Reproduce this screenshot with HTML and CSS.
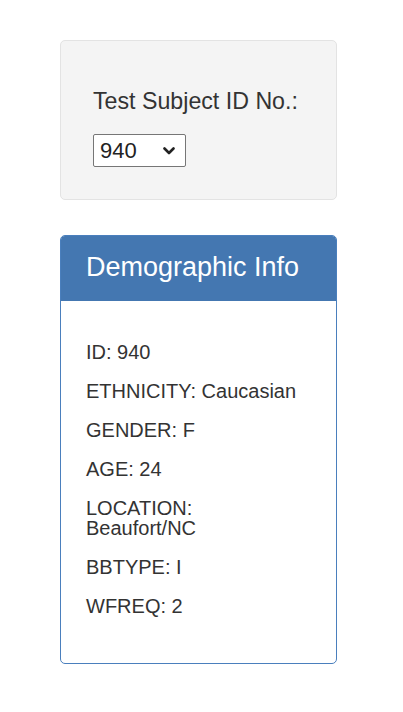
FILE: index.html
```html
<!DOCTYPE html>
<html>
<head>
<meta charset="utf-8">
<link rel="stylesheet" href="styles.css">
</head>
<body>
<div class="col">
  <div class="well">
    <label class="lbl" for="sel">Test Subject ID No.:</label>
    <div class="select-wrap">
      <select id="sel" class="sel"><option>940</option></select>
      <svg class="chev" width="12" height="8" viewBox="0 0 12 8"><path d="M1.5 1.5 L6 6 L10.5 1.5" fill="none" stroke="#222" stroke-width="2.6" stroke-linecap="round" stroke-linejoin="round"/></svg>
    </div>
  </div>
  <div class="panel">
    <div class="panel-head">Demographic Info</div>
    <div class="panel-body">
      <p>ID: 940</p>
      <p>ETHNICITY: Caucasian</p>
      <p>GENDER: F</p>
      <p>AGE: 24</p>
      <p>LOCATION:<br>Beaufort/NC</p>
      <p>BBTYPE: I</p>
      <p>WFREQ: 2</p>
    </div>
  </div>
</div>
</body>
</html>
```
FILE: styles.css
```css
html, body {
  margin: 0;
  padding: 0;
  background: #fff;
}
body {
  font-family: "Liberation Sans", Arial, sans-serif;
  color: #333;
}
.col {
  width: 277px;
  margin-left: 60px;
  padding-top: 40px;
  display: flex;
  flex-direction: column;
  gap: 35px;
}
.well {
  box-sizing: border-box;
  height: 160px;
  background: #f4f4f4;
  border: 1px solid #e3e3e3;
  border-radius: 5px;
  padding: 47px 32px 0 32px;
  display: flex;
  flex-direction: column;
  align-items: flex-start;
  gap: 20px;
}
.lbl {
  font-size: 23.2px;
  line-height: 26px;
  color: #333;
}
.select-wrap {
  position: relative;
  display: inline-block;
}
.sel {
  -webkit-appearance: none;
  appearance: none;
  box-sizing: border-box;
  width: 93px;
  height: 33px;
  border: 1px solid #767676;
  border-radius: 2px;
  background: #fff;
  font-family: "Liberation Sans", Arial, sans-serif;
  font-size: 22px;
  color: #222;
  padding: 0 0 0 6px;
  margin: 0;
  display: block;
}
.chev {
  position: absolute;
  right: 11px;
  top: 13px;
  pointer-events: none;
}
.panel {
  box-sizing: border-box;
  height: 429px;
  border: 1px solid #4a7fbd;
  border-radius: 5px;
  overflow: hidden;
  background: #fff;
}
.panel-head {
  box-sizing: border-box;
  height: 65px;
  background: #4477b1;
  color: #fff;
  font-size: 27px;
  line-height: 62px;
  padding-left: 25px;
}
.panel-body {
  padding: 41px 25px 0 25px;
  display: flex;
  flex-direction: column;
  gap: 19px;
}
.panel-body p {
  margin: 0;
  font-size: 20px;
  line-height: 20px;
  color: #333;
}
```
